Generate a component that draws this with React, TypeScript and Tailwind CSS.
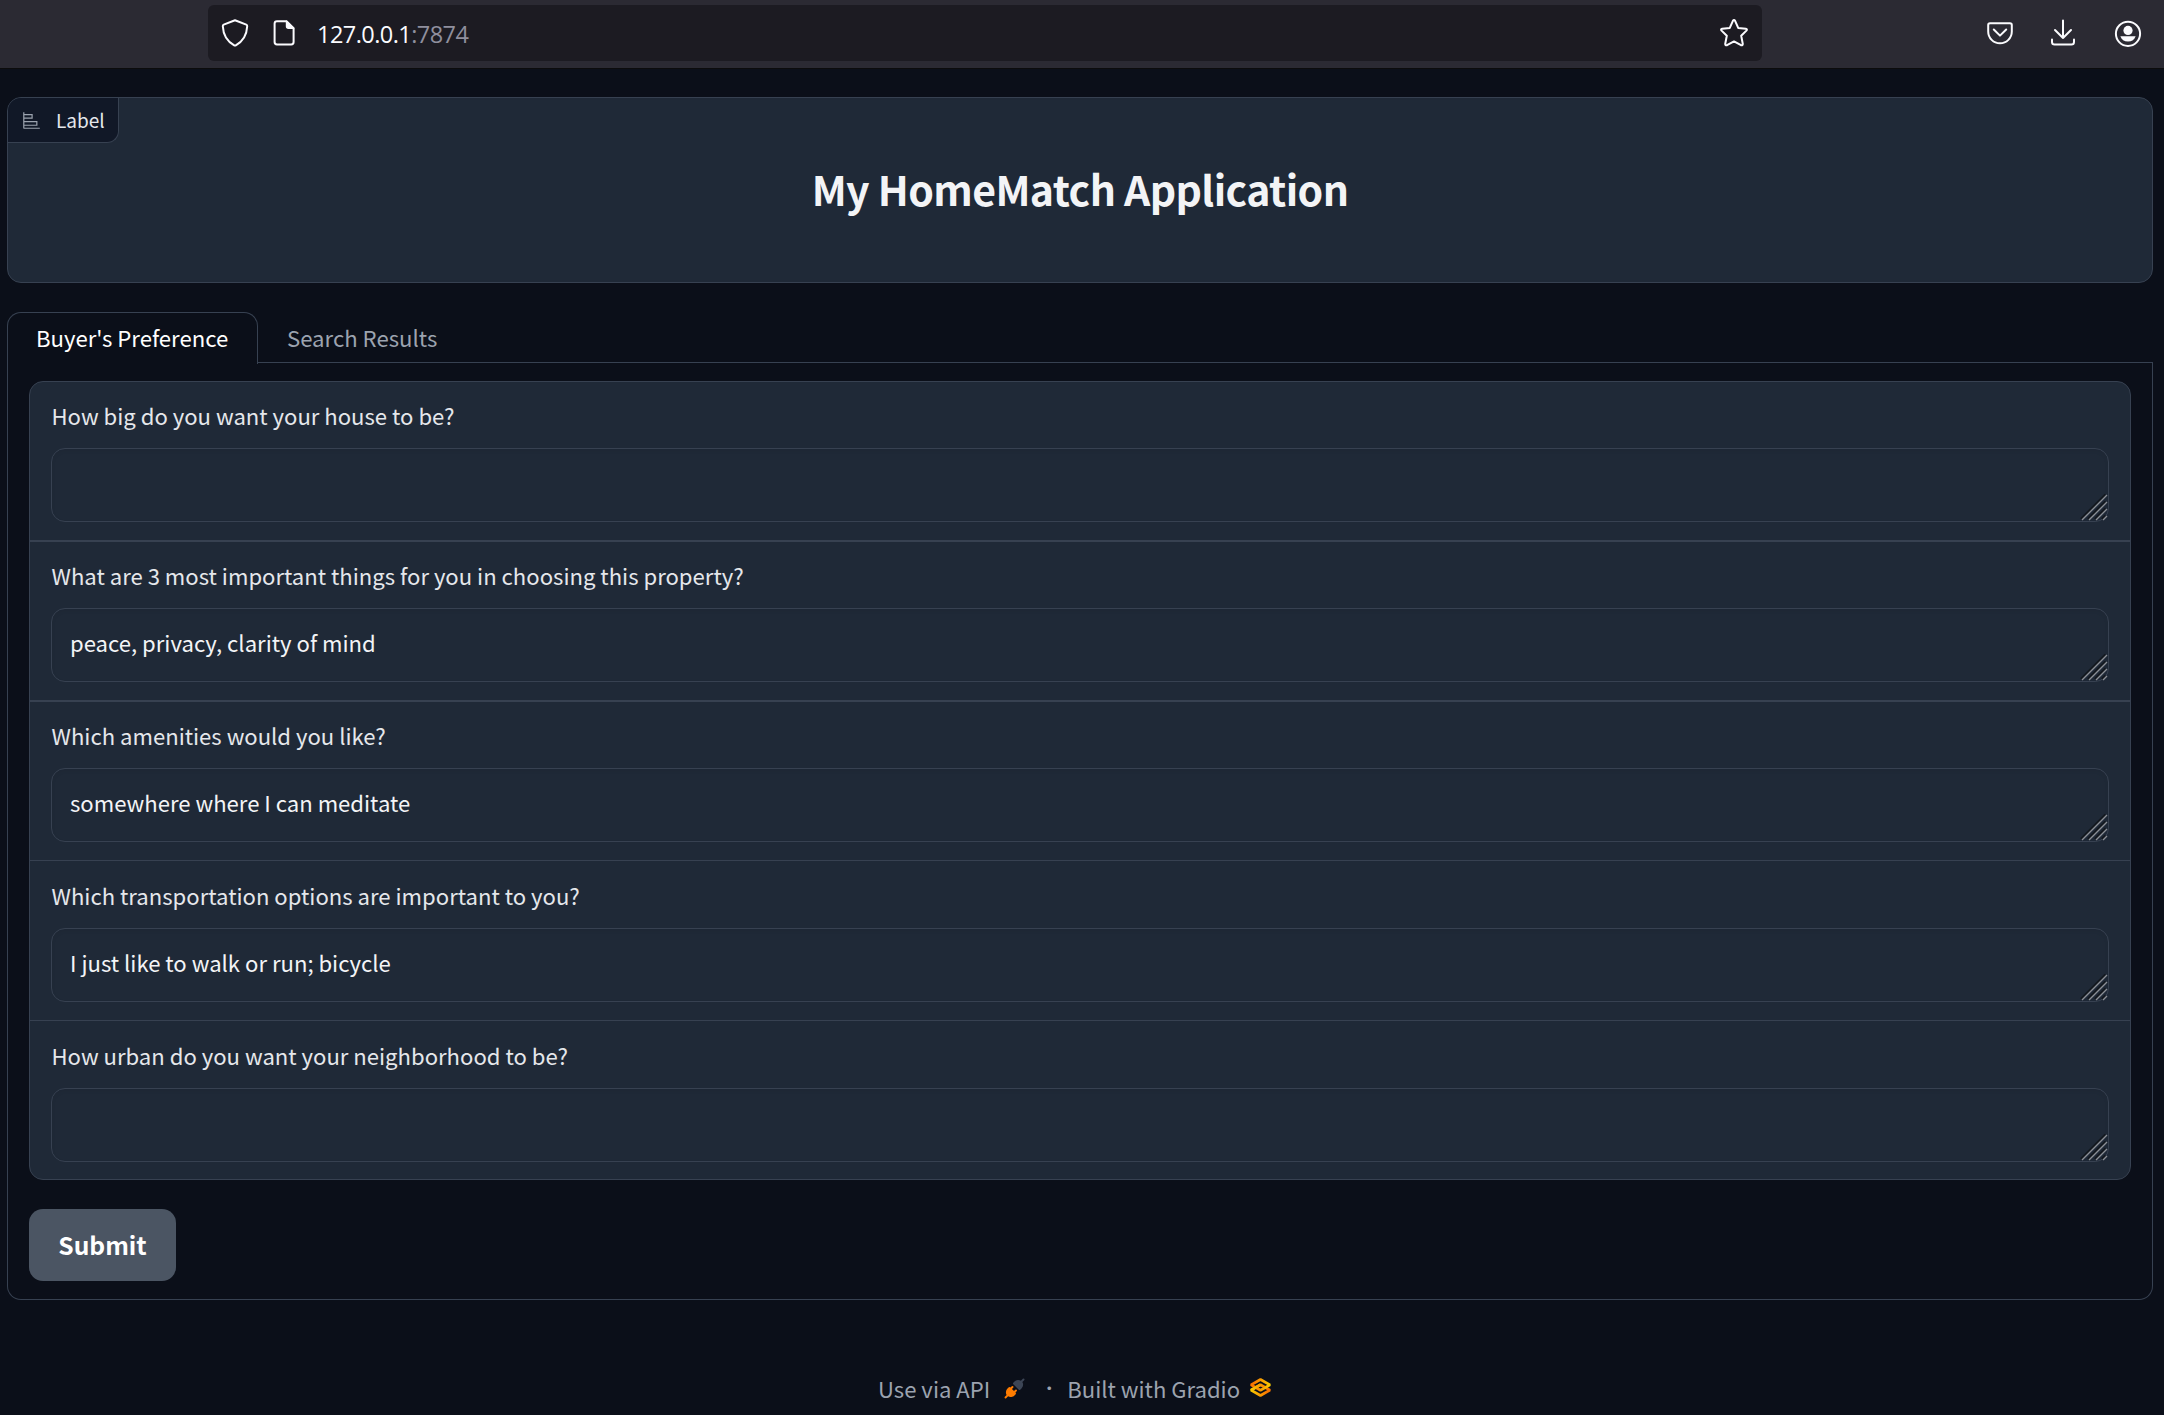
import React from "react";

const questions = [
  { label: "How big do you want your house to be?", value: "", divider: "h-40 border-b-2" },
  { label: "What are 3 most important things for you in choosing this property?", value: "peace, privacy, clarity of mind", divider: "h-40 border-b-2" },
  { label: "Which amenities would you like?", value: "somewhere where I can meditate", divider: "mb-px h-[159px] border-b" },
  { label: "Which transportation options are important to you?", value: "I just like to walk or run; bicycle", divider: "mb-px h-[159px] border-b" },
  { label: "How urban do you want your neighborhood to be?", value: "", divider: "h-[158px]" },
];

function Toolbar() {
  return (
    <header className="flex h-[69px] items-start border-b border-[#0c0c0d] bg-[#2b2a33] pt-[5px] text-[#fbfbfe]">
      <div className="ml-[208px] flex h-14 w-[1554px] items-center rounded-md bg-[#1c1b22] pr-[14px] pl-[13px]">
        <svg className="h-7 w-7" viewBox="0 0 28 28" fill="none" stroke="currentColor" strokeWidth="2" strokeLinejoin="round">
          <path d="M14 1.2 L25.3 5.6 Q26.3 6 26.2 7.2 C25.8 15.5 22.5 22 14.8 26.3 Q14 26.8 13.2 26.3 C5.5 22 2.2 15.5 1.8 7.2 Q1.7 6 2.7 5.6 Z" />
        </svg>
        <svg className="ml-[23px] h-7 w-6" viewBox="0 0 24 28" fill="none" stroke="currentColor" strokeWidth="2" strokeLinejoin="round">
          <path d="M14.5 2.2 H5 Q2.6 2.2 2.6 4.6 V23 Q2.6 25.4 5 25.4 H19.2 Q21.6 25.4 21.6 23 V9.2 Z" />
          <path d="M14.5 2.2 V7.2 Q14.5 9.2 16.5 9.2 H21.6 Z" fill="currentColor" strokeWidth="1.4" />
        </svg>
        <div className="ml-[21px] pt-[3px] font-['Open_Sans',sans-serif] text-[23.5px] tracking-[-0.55px]">
          127.0.0.1<span className="text-[#8f8f9d]">:7874</span>
        </div>
        <svg className="ml-auto h-7 w-7" viewBox="0 0 28 28" fill="none" stroke="currentColor" strokeWidth="2" strokeLinejoin="round">
          <path d="M12.9 1.9 Q14 .2 15.1 1.9 L18.2 8.9 L25.8 9.7 Q27.6 10.2 26.4 11.6 L21.2 16.8 L22.8 25 Q22.7 26.8 21 26.2 L14 22.4 L7 26.2 Q5.3 26.8 5.2 25 L6.8 16.8 L1.6 11.6 Q.4 10.2 2.2 9.7 L9.8 8.9 Z" />
        </svg>
      </div>
      <div className="mr-[22px] ml-auto flex h-14 items-center">
        <svg className="h-7 w-7" viewBox="0 0 28 28" fill="none" stroke="currentColor" strokeWidth="2" strokeLinecap="round" strokeLinejoin="round">
          <path d="M4 4.2 H24 Q25.8 4.2 25.8 6 V12.5 A11.8 11.8 0 0 1 2.2 12.5 V6 Q2.2 4.2 4 4.2 Z" />
          <path d="M7.8 10.5 L14 16.6 L20.2 10.5" />
        </svg>
        <svg className="ml-[35px] h-7 w-7" viewBox="0 0 28 28" fill="none" stroke="currentColor" strokeWidth="2" strokeLinecap="round" strokeLinejoin="round">
          <path d="M14 1.5 V19 M6 11 L14 19 L22 11" />
          <path d="M3 20.5 V23 Q3 25.6 5.6 25.6 H22.4 Q25 25.6 25 23 V20.5" />
        </svg>
        <svg className="ml-[37px] h-7 w-7" viewBox="0 0 28 28" fill="none">
          <circle cx="14" cy="14.8" r="12.1" stroke="currentColor" strokeWidth="2" />
          <circle cx="14" cy="11.4" r="4.6" fill="currentColor" />
          <path d="M6.4 17.3 H21.6 C20.6 20.8 17.8 22.6 14 22.6 S7.4 20.8 6.4 17.3 Z" fill="currentColor" />
        </svg>
      </div>
    </header>
  );
}

function TitleBlock() {
  return (
    <section className="relative mt-7 flex h-[186px] justify-center rounded-[14px] border border-[#374151] bg-[#1f2937] pt-[60px]">
      <div className="absolute top-0 left-0 flex h-[45px] w-[111px] items-center rounded-tl-[13px] rounded-br-xl border-r border-b border-[#374151] bg-[#111827] pl-[14px] text-[19px] leading-none text-[#e5e7eb]">
        <svg className="h-[19px] w-[19px] text-[#9ca3af]" viewBox="0 0 32 32" fill="currentColor">
          <path d="M4 2H2v26a2 2 0 0 0 2 2h26v-2H4v-3h22v-8H4v-4h14V5H4Zm20 17v4H4v-4ZM16 7v4H4V7Z" />
        </svg>
        <span className="ml-[15px] pb-[2px]">Label</span>
      </div>
      <h1 className="text-[41px] leading-[60px] font-semibold tracking-[-0.58px] text-[#f3f4f6]">My HomeMatch Application</h1>
    </section>
  );
}

function Question({ label, value, divider }: { label: string; value: string; divider: string }) {
  return (
    <div className={`border-[#374151] px-[21px] pt-4 ${divider}`}>
      <div className="pl-[0.5px] text-[22.1px] leading-[34px] text-[#e5e7eb]">{label}</div>
      <div className="relative mt-4 h-[74px] rounded-[14px] border border-[#374151] px-[18px] text-[22.1px] leading-[66px] text-[#f3f4f6] shadow-[inset_0_2px_4px_rgba(0,0,0,0.05)]">
        {value}
        <svg className="absolute right-0 bottom-0 h-7 w-7" viewBox="0 0 28 28" fill="none">
          <path d="M1 26 L25.5 1.5 M8 26 L25.5 8.5 M15 26 L25.5 15.5 M22 26 L25.5 22.5" stroke="#13181f" strokeWidth="2.4" />
          <path d="M2 27 L27 2 M9 27 L27 9 M16 27 L27 16 M23 27 L27 23" stroke="#8b8f96" strokeWidth="1.4" />
        </svg>
      </div>
    </div>
  );
}

function Footer() {
  return (
    <footer className="mt-[68px] flex h-10 items-center pl-[871px] text-[22.1px] leading-10 whitespace-nowrap text-[#9ca3af]">
      <span>Use via API</span>
      <svg className="ml-[14px] h-[21px] w-[21px]" viewBox="0 0 28 28">
        <path fill="#3c4555" d="M26.94 2.94a1.33 1.33 0 0 0-1.88-1.88l-2.49 2.48c-1.45-.95-3.03-1.11-4.4-.9-1.62.25-3.06 1.03-3.78 1.75l-2 2a1.33 1.33 0 0 0 0 1.89l7.33 7.33c.52.52 1.37.52 1.89 0l2-2c.72-.72 1.5-2.16 1.75-3.79.21-1.36.05-2.94-.9-4.39z" />
        <path fill="#ff7c00" d="M12.28 12.94a1.33 1.33 0 0 0-1.89-1.88l-1.72 1.72-.39-.39a1.33 1.33 0 0 0-1.89 0l-2 2c-.72.72-1.5 2.16-1.75 3.79-.21 1.36-.05 2.94.9 4.39l-2.48 2.49a1.33 1.33 0 0 0 1.88 1.88l2.49-2.48c1.45.95 3.03 1.11 4.39.9 1.63-.25 3.07-1.03 3.79-1.75l2-2c.52-.52.52-1.37 0-1.89l-.39-.39 1.72-1.72a1.33 1.33 0 0 0-1.88-1.89l-1.73 1.73-2.78-2.78z" />
      </svg>
      <span className="ml-[13px] w-[22px] text-center text-[17px]">·</span>
      <span className="ml-[7px]">Built with Gradio</span>
      <svg className="-mt-px ml-[7px] h-[27px] w-[27px]" viewBox="0 0 576 576" fill="none" strokeWidth="59">
        <defs>
          <linearGradient id="lower" x1="60" y1="341" x2="429.5" y2="344" gradientUnits="userSpaceOnUse">
            <stop stopColor="#F9D100" />
            <stop offset="1" stopColor="#F97700" />
          </linearGradient>
          <linearGradient id="upper" x1="513.5" y1="231" x2="143.5" y2="231" gradientUnits="userSpaceOnUse">
            <stop stopColor="#F9D100" />
            <stop offset="1" stopColor="#F97700" />
          </linearGradient>
        </defs>
        <path d="M287.5 229L86 344.5L287.5 460L489 344.5L287.5 229Z" stroke="url(#lower)" strokeLinejoin="bevel" />
        <path d="M287.5 116L86 231.5L287.5 347L489 231.5L287.5 116Z" stroke="url(#upper)" strokeLinejoin="bevel" />
        <path d="M86 344L288 229" stroke="url(#lower)" strokeLinejoin="bevel" />
      </svg>
    </footer>
  );
}

export default function App() {
  return (
    <div className="h-[1415px] w-[2164px] overflow-hidden bg-[#0b0f19] font-['Noto_Sans_CJK_SC',sans-serif]">
      <Toolbar />
      <main className="mr-[11px] ml-[7px]">
        <TitleBlock />
        <nav className="mt-[29px] flex h-[52px] items-stretch text-[22.15px] whitespace-nowrap">
          <div className="w-[251px] rounded-t-[14px] border border-b-0 border-[#374151] pl-[28px] leading-[48px] text-white">Buyer's Preference</div>
          <div className="mb-px flex-1 border-b border-[#374151] pl-[29px] leading-[50px] text-[#9ca3af]">Search Results</div>
        </nav>
        <section className="-mt-px h-[937px] rounded-b-[14px] border border-t-0 border-[#374151] px-[21px] pt-[18px]">
          <div className="h-[799px] overflow-hidden rounded-[14px] border border-[#374151] bg-[#1f2937]">
            {questions.map((q) => (
              <Question key={q.label} {...q} />
            ))}
          </div>
          <button className="mt-[29px] h-[72px] w-[147px] rounded-[14px] bg-[#4b5563] pb-[2px] text-[24.6px] leading-[70px] font-semibold text-white">Submit</button>
        </section>
        <Footer />
      </main>
    </div>
  );
}
